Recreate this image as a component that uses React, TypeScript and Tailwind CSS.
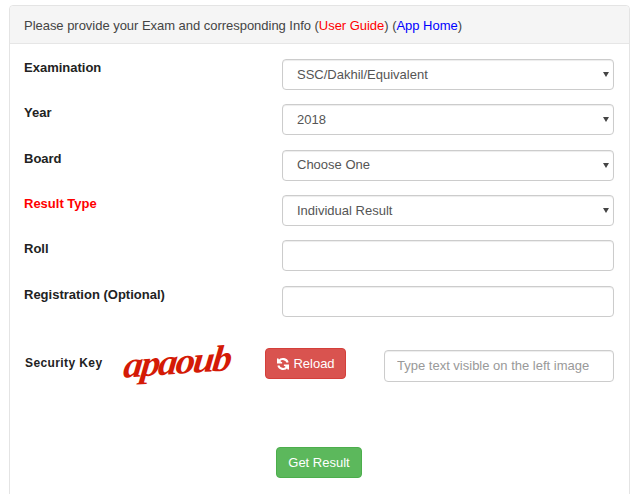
import React from "react";

const font = { fontFamily: '"Liberation Sans", Arial, sans-serif' };

function Caret() {
  return (
    <svg className="absolute right-[5px] top-[13px]" width="6" height="5" viewBox="0 0 6 5">
      <path d="M0 0H6L3 5Z" fill="#444" />
    </svg>
  );
}

function SelectField({ value }: { value: string }) {
  return (
    <div className="relative w-[332px] h-[31px]">
      <select
        defaultValue={value}
        className="appearance-none w-full h-full rounded-[4px] border border-[#ccc] bg-white pl-[14px] pr-5 text-[13px] text-[#555] shadow-[inset_0_1px_1px_rgba(0,0,0,0.075)] outline-none font-['Liberation_Sans',Arial,sans-serif]"
      >
        <option>{value}</option>
      </select>
      <Caret />
    </div>
  );
}

function TextField() {
  return (
    <input className="block w-[332px] h-[31px] rounded-[4px] border border-[#ccc] bg-white shadow-[inset_0_1px_1px_rgba(0,0,0,0.075)] outline-none" />
  );
}

function Row({ label, red, children }: { label: string; red?: boolean; children: React.ReactNode }) {
  return (
    <div className="flex justify-between h-[31px] mb-[14.35px]">
      <div className={`text-[13px] leading-[18px] font-bold ${red ? "text-[#f00]" : "text-[#222]"}`}>{label}</div>
      {children}
    </div>
  );
}

export default function App() {
  return (
    <div className="w-[640px] h-[494px] overflow-hidden bg-white pt-[5px] pl-[9px]" style={font}>
      <div className="w-[621px] h-[520px] rounded-[4px] border border-[#e4e4e4]">
        <div className="h-[38px] bg-[#f5f5f5] border-b border-[#e6e6e6] rounded-t-[4px] pl-[14px] text-[13px] tracking-[-0.03px] leading-[39px] text-[#444]">
          Please provide your Exam and corresponding Info (<span className="text-[#f00]">User Guide</span>) (<span className="text-[#00f]">App Home</span>)
        </div>
        <div className="pt-[15px] pl-[14px] pr-[15px]">
          <Row label="Examination"><SelectField value="SSC/Dakhil/Equivalent" /></Row>
          <Row label="Year"><SelectField value="2018" /></Row>
          <Row label="Board"><SelectField value="Choose One" /></Row>
          <Row label="Result Type" red><SelectField value="Individual Result" /></Row>
          <Row label="Roll"><TextField /></Row>
          <Row label="Registration (Optional)"><TextField /></Row>

          <div className="flex items-center h-[32px] mt-[31.25px]">
            <div className="w-[100px] pl-[1px] pb-[2px] text-[12px] font-bold tracking-[0.4px] text-[#222]">Security Key</div>
            <div
              className="w-[141px] text-[46px] leading-[32px] pt-[5px] text-[#d41a06] font-bold italic tracking-[-2.5px] origin-left [transform:rotate(-4deg)_skewX(-10deg)_scale(0.85,0.8)]"
              style={{ fontFamily: '"Liberation Serif", "Times New Roman", serif' }}
            >
              apaoub
            </div>
            <button className="flex items-center justify-center w-[81px] h-[31px] rounded-[4px] border border-[#d43f3a] bg-[#d9534f] text-[13px] text-white gap-[3px]">
              <svg width="14" height="14" viewBox="0 0 24 24" fill="none" stroke="white" strokeWidth="3.6" strokeLinecap="butt">
                <path d="M20 9.5A8.6 8.6 0 0 0 5.2 6.6L3 9" />
                <path d="M3 2.5V10H10.5" strokeWidth="2.6" fill="white" />
                <path d="M4 14.5A8.6 8.6 0 0 0 18.8 17.4L21 15" />
                <path d="M21 21.5V14H13.5" strokeWidth="2.6" fill="white" />
              </svg>
              Reload
            </button>
            <input
              placeholder="Type text visible on the left image"
              className="ml-[38px] self-start mt-[2px] shrink-0 w-[230px] h-[32px] rounded-[4px] border border-[#ccc] bg-white px-[12px] text-[13px] text-[#555] placeholder:text-[#999] shadow-[inset_0_1px_1px_rgba(0,0,0,0.075)] outline-none font-['Liberation_Sans',Arial,sans-serif]"
            />
          </div>

          <div className="flex justify-center mt-[67px]">
            <button className="w-[86px] h-[31px] rounded-[4px] border border-[#4cae4c] bg-[#5cb85c] text-[13px] text-white">Get Result</button>
          </div>
        </div>
      </div>
    </div>
  );
}
